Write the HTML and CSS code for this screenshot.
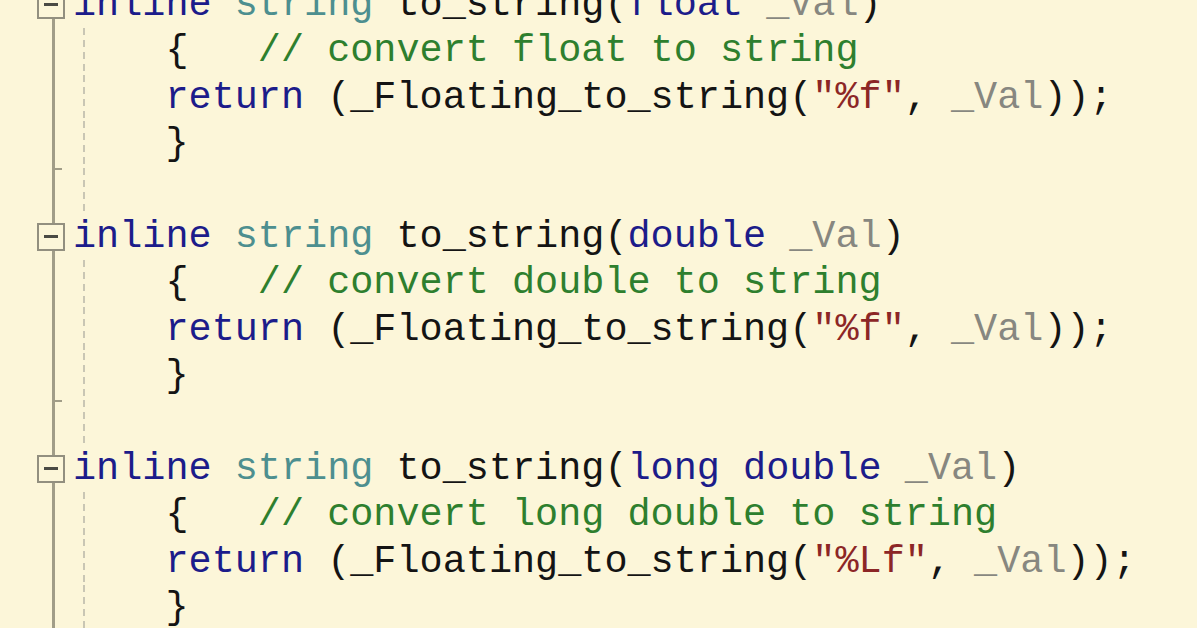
FILE: index.html
```html
<!DOCTYPE html>
<html lang="en">
<head>
<meta charset="utf-8">
<title>to_string</title>
<link rel="stylesheet" href="styles.css">
</head>
<body>
<div class="editor">
  <div class="line head"><div class="gutter"><span class="fold"></span></div><div class="code"><span class="kw">inline</span> <span class="ty">string</span> to_string(<span class="kw">float</span> <span class="pm">_Val</span>)</div></div>
  <div class="line body"><div class="gutter"></div><div class="code">    {   <span class="cm">// convert float to string</span></div></div>
  <div class="line body"><div class="gutter"></div><div class="code">    <span class="kw">return</span> (_Floating_to_string(<span class="st">"%f"</span>, <span class="pm">_Val</span>));</div></div>
  <div class="line body end"><div class="gutter"><span class="tick"></span></div><div class="code">    }</div></div>
  <div class="line body"><div class="gutter"></div><div class="code"> </div></div>

  <div class="line head"><div class="gutter"><span class="fold"></span></div><div class="code"><span class="kw">inline</span> <span class="ty">string</span> to_string(<span class="kw">double</span> <span class="pm">_Val</span>)</div></div>
  <div class="line body"><div class="gutter"></div><div class="code">    {   <span class="cm">// convert double to string</span></div></div>
  <div class="line body"><div class="gutter"></div><div class="code">    <span class="kw">return</span> (_Floating_to_string(<span class="st">"%f"</span>, <span class="pm">_Val</span>));</div></div>
  <div class="line body end"><div class="gutter"><span class="tick"></span></div><div class="code">    }</div></div>
  <div class="line body"><div class="gutter"></div><div class="code"> </div></div>

  <div class="line head"><div class="gutter"><span class="fold"></span></div><div class="code"><span class="kw">inline</span> <span class="ty">string</span> to_string(<span class="kw">long</span> <span class="kw">double</span> <span class="pm">_Val</span>)</div></div>
  <div class="line body"><div class="gutter"></div><div class="code">    {   <span class="cm">// convert long double to string</span></div></div>
  <div class="line body"><div class="gutter"></div><div class="code">    <span class="kw">return</span> (_Floating_to_string(<span class="st">"%Lf"</span>, <span class="pm">_Val</span>));</div></div>
  <div class="line body"><div class="gutter"></div><div class="code">    }</div></div>
</div>
</body>
</html>
```
FILE: styles.css
```css
html, body {
  margin: 0;
  padding: 0;
  height: 628px;
  overflow: hidden;
  background: #fcf6d9;
}

.editor {
  margin-top: -18px;
  font-family: "Liberation Mono", "DejaVu Sans Mono", monospace;
  font-size: 38.5px;
  color: #141414;
}

.line {
  display: grid;
  grid-template-columns: 73px 1fr;
  height: 46.4px;
  line-height: 46.4px;
}

.gutter {
  position: relative;
  background: linear-gradient(to right, transparent 52px, #a19d88 52px, #a19d88 55px, transparent 55px);
}

.code {
  white-space: pre;
}

.body .code {
  background-image: repeating-linear-gradient(to bottom, #c9c6b4 0, #c9c6b4 7px, transparent 7px, transparent 12px);
  background-size: 2px 100%;
  background-position: 10px 0;
  background-repeat: no-repeat;
}

.fold {
  position: absolute;
  left: 37px;
  top: 9px;
  width: 24px;
  height: 24px;
  border: 2px solid #928f7f;
  background: #fcf6d9;
}

.fold::after {
  content: "";
  position: absolute;
  left: 5px;
  right: 5px;
  top: 10px;
  height: 3px;
  background: #4a4a44;
}

.tick {
  position: absolute;
  left: 53px;
  bottom: -2px;
  width: 9px;
  height: 2px;
  background: #a19d88;
}

.kw { color: #1c1c8a; }
.ty { color: #4d8f8f; }
.cm { color: #2e7f2e; }
.st { color: #8c2626; }
.pm { color: #878780; }
```
